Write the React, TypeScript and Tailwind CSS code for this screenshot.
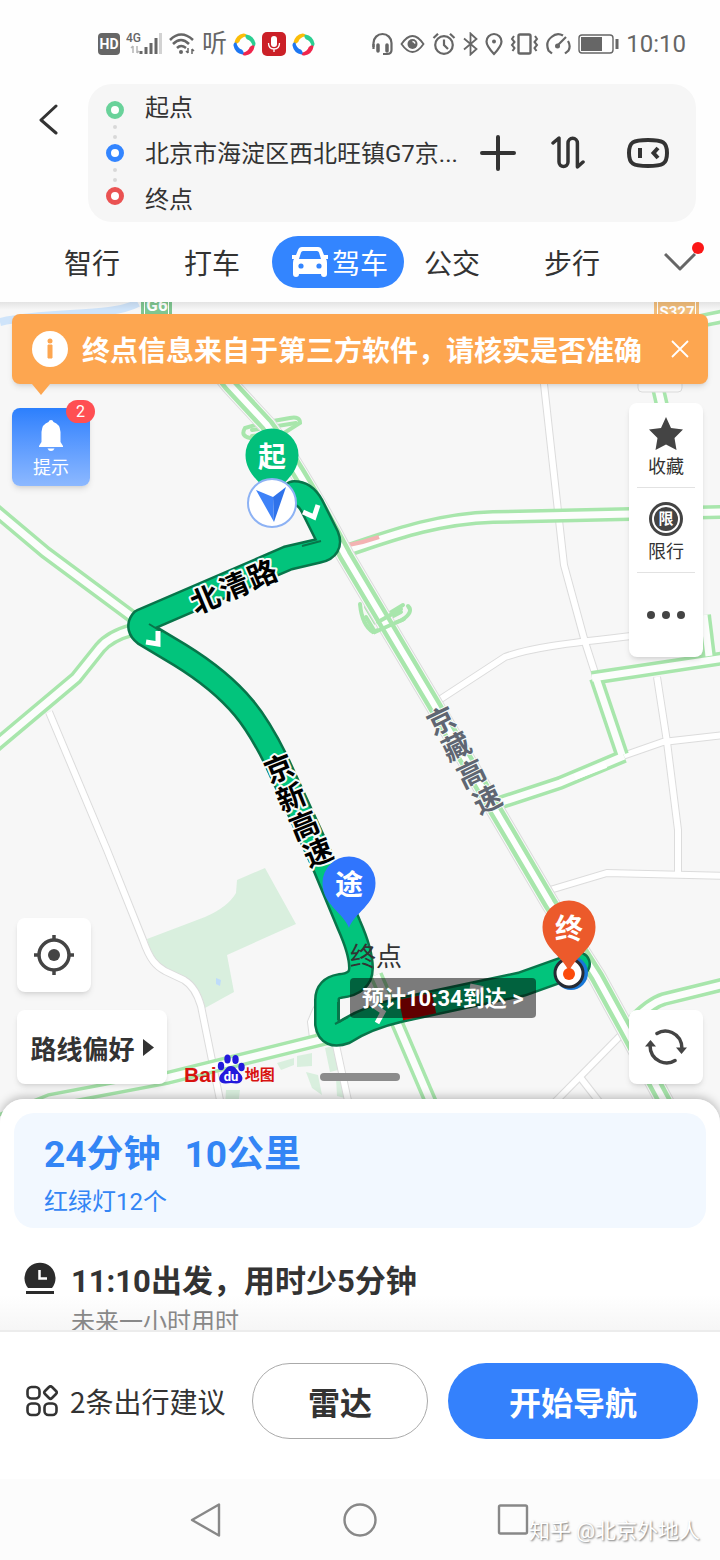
import type { ReactNode } from 'react';

const tabs = ['智行', '打车', '驾车', '公交', '步行'];

const minorRoads = [
  'M49 712 L107 850 L143 940 C150 960 156 966 165 971 L184 980 C194 986 198 996 201 1006 L222 1110',
  'M543 375 L557 502 L564 565 L585 642 L596 676',
  'M430 706 L505 657 C530 648 560 644 640 635',
  'M657 677 L667 742 L678 830 L678 876',
  'M617 758 L663 742 L725 735',
  'M550 890 L607 873 L725 876',
  'M555 1102 L622 1034',
  'M580 1077 L604 1108',
  'M322 1000 L316 1010 L311 1022 L313 1038 M336 1045 L350 1110',
];

const trafficRoads = [
  'M-5 510 L45 552 L142 624',
  'M-5 746 L76 678 L100 648 Q110 636 132 630',
  'M342 552 C380 540 430 519 493 517 L725 512',
  'M592 678 L725 658',
  'M596 678 L622 755',
  'M704 615 L709 656',
  'M493 805 L560 783 L624 756',
  'M622 1034 Q645 1005 664 999 L725 984',
  'M-5 1122 L50 1100 L167 1078 L336 1036',
  'M376 975 L397 1023 L432 1105',
  'M658 388 L663 410',
  'M690 323 L725 316',
];

const expressway = 'M190 335 L230 385 L267 425 Q300 470 345 555 L402 651 L433 703 L497 813 L550 903 L597 977 L626 1030 L668 1108';

const route =
  'M294 493 Q305 493 312 506 L327 536 Q332 548 318 551 L288 558 L142 621 Q137 628 145 634 L180 655 C240 692 258 724 276 760 L322 860 L349 925 Q361 952 361 968 Q361 984 340 986 Q327 988 327 1000 L327 1024 Q329 1038 345 1032 Q366 1018 400 1010 L522 984 L578 964';

type Glyph = [string, number, number];

const beiqing: Glyph[] = [['北', 205, 599], ['清', 234, 586], ['路', 262, 574]];
const jingxin: Glyph[] = [['京', 279, 768], ['新', 291, 797], ['高', 304, 825], ['速', 318, 852]];
const jingzang: Glyph[] = [['京', 441, 720], ['藏', 456, 746], ['高', 471, 773], ['速', 487, 799]];

function RoadName({ glyphs, angle, dark }: { glyphs: Glyph[]; angle: number; dark?: boolean }) {
  return (
    <g
      className={dark ? 'fill-black text-[29px] font-bold' : 'fill-[#5f6672] text-[28px] font-bold'}
      stroke="#f7fbf8"
      strokeWidth={dark ? 4 : 2}
      strokeLinejoin="round"
      paintOrder="stroke"
      textAnchor="middle"
    >
      {glyphs.map(([char, x, y]) => (
        <text key={char} x={x} y={y} dy={11} transform={`rotate(${angle} ${x} ${y})`}>
          {char}
        </text>
      ))}
    </g>
  );
}

function Pin({ x, y, color, label }: { x: number; y: number; color: string; label: string }) {
  return (
    <g transform={`translate(${x} ${y})`}>
      <path d="M0 45 C-5 30 -26.500 22 -26.500 0 A26.500 26.500 0 0 1 26.500 0 C26.500 22 5 30 0 45Z" fill={color} />
      <text y={12} textAnchor="middle" className="fill-white text-[28px] font-bold">
        {label}
      </text>
    </g>
  );
}

function MapCanvas() {
  return (
    <svg className="absolute inset-0 size-full" viewBox="0 302 720 830" preserveAspectRatio="xMidYMin slice" fill="none">
      <rect y="302" width="720" height="830" fill="#f7f7f7" />
      <path d="M0 322 C50 310 110 318 138 303" stroke="#cfe4fa" strokeWidth="8" />
      <path
        d="M147 939 L205 917 Q228 907 236 893 L237 880 L265 868 L296 924 L227 955 L234 992 L205 1008 Q200 985 185 977 L163 967 Q152 960 147 939Z"
        fill="#d9efde"
      />
      <path d="M216 978 l5 2 -1 6 -4 -2z" fill="#bfdcfa" />
      <path d="M277 1063 L294 1058 V1065 L281 1070Z M297 1056 L312 1053 V1066 L297 1067Z M325 1048 L336 1045 L338 1070 L330 1072Z M226 1090 H240 L238 1106 H225Z M306 1072 L318 1075 L322 1095 L312 1088Z M336 1078 L344 1082 L345 1098 L337 1096Z" fill="#d9efde" />

      {minorRoads.map((d) => (
        <path key={d} d={d} stroke="#dcdcdc" strokeWidth="8" />
      ))}
      {minorRoads.map((d) => (
        <path key={d} d={d} stroke="#fff" strokeWidth="6" />
      ))}
      {trafficRoads.map((d) => (
        <path key={d} d={d} stroke="#a8e6ac" strokeWidth="14" />
      ))}
      {trafficRoads.map((d) => (
        <path key={d} d={d} stroke="#fcfdfc" strokeWidth="7" />
      ))}
      <path d="M344 546 Q362 543 379 537" stroke="#f3b3b3" strokeWidth="4" />
      <path d="M575 777 L606 765" stroke="#fff" strokeWidth="6" />

      {/* interchanges */}
      <g stroke="#a8e6ac" strokeWidth="4" strokeLinecap="round">
        <path d="M250 438 Q240 436 245 428 L262 423 L290 418 Q300 416 300 423 L284 433 L252 436" />
        <path d="M252 430 L296 423" />
        <path d="M360 604 Q362 625 373 632 L402 620 Q414 612 408 606" />
        <path d="M366 607 L375 622 L403 605 M378 624 L401 612" />
      </g>

      <path d={expressway} stroke="#dcdcdc" strokeWidth="19" />
      <path d={expressway} stroke="#fafafa" strokeWidth="17" />
      <path d={expressway} stroke="#a8e6ac" strokeWidth="15" />
      <path d={expressway} stroke="#fff" strokeWidth="6" />
      <g stroke="#a8e6ac" strokeWidth="4" strokeLinecap="round">
        <path d="M366 617 L375 632 L404 619 M378 622 L401 609" />
      </g>

      <path d="M141 300 h31 v16 h-31z" fill="#7fc690" />
      <path d="M144.500 300 v16 M168.500 300 v16" stroke="#fff" />
      <text x="157" y="311" textAnchor="middle" className="fill-white text-[17px] font-bold">G6</text>
      <path d="M654 300 h45 v18 h-45z" fill="#f1bd7b" />
      <path d="M657.500 300 v18 M695.500 300 v18" stroke="#fff" />
      <text x="677" y="317" textAnchor="middle" className="fill-white text-[15px] font-bold">S327</text>
      <rect x="638" y="366" width="44" height="26" rx="4" fill="#fafafa" stroke="#ddd" />

      <path d={route} stroke="#08754a" strokeWidth="26" strokeLinecap="round" strokeLinejoin="round" />
      <path d={route} stroke="#02c47c" strokeWidth="21" strokeLinecap="round" strokeLinejoin="round" />
      <path d="M401 1010 L434 1003" stroke="#c00000" strokeWidth="21" />
      <path d="M321 541 L302 546 M149 624 L162 632 M338 1002 V1020 M335 1024 L348 1017" stroke="#08754a" strokeWidth="2" />
      <path d="M303 512 L314 517 L318 505 M146 642 L158 644 L158 631 M371 1004 L383 1012 L377 1023 M470 986 L480 988 L476 996" stroke="#fff" strokeWidth="5" />

      <RoadName glyphs={beiqing} angle={-23} dark />
      <RoadName glyphs={jingxin} angle={-22} dark />
      <RoadName glyphs={jingzang} angle={-26} />

      <text x="350" y="966" className="fill-[#333] text-[26px]">终点</text>

      <Pin x={272} y={455} color="#02c07b" label="起" />
      <circle cx="272" cy="503" r="24" fill="#fff" stroke="#8db2f4" strokeWidth="2" />
      <path d="M256 490 L273 497 L274 522Z" fill="#3e82f8" />
      <path d="M286 487 L273 497 L274 522Z" fill="#2f72ea" />

      <Pin x={349} y={883} color="#3075fd" label="途" />
      <circle cx="571" cy="973" r="17" fill="#1878d8" />
      <circle cx="569" cy="973" r="14" fill="#fff" stroke="#262b33" strokeWidth="3" />
      <Pin x={569} y={927} color="#ec5a2b" label="终" />
      <circle cx="569" cy="974" r="6" fill="#fb4b0c" />
    </svg>
  );
}

const swirlBlades = [
  { angle: 0, color: '#fbbd08' },
  { angle: 90, color: '#2bcf92' },
  { angle: 180, color: '#f0264c' },
  { angle: 270, color: '#1d77f2' },
];

function Swirl() {
  return (
    <svg className="size-[23px]" viewBox="0 0 24 24">
      {swirlBlades.map(({ angle, color }) => (
        <path key={angle} d="M1.500 10 Q3 2 11 0.500 Q14.500 0.500 14 3.500 Q8 4.500 6.500 9.500 Q3 12.500 1.500 10Z" fill={color} transform={`rotate(${angle} 12 12)`} />
      ))}
    </svg>
  );
}

function StatusBar() {
  return (
    <div className="flex items-center justify-between pt-8 pr-[34px] pb-7 pl-[98px] text-[#666]">
      <div className="flex h-6 items-center gap-1.5">
        <span className="flex size-[22px] items-center justify-center rounded bg-[#666] text-[14px] font-bold text-white">HD</span>
        <svg className="h-6 w-9" viewBox="0 0 36 24">
          <text x="0" y="10" fontSize="12" fontWeight="500" fill="#666">4G</text>
          <path d="M7 14v7M5 16l2-2M11 21v-7M13 19l-2 2" stroke="#b5b5b5" strokeWidth="1.500" fill="none" />
          <path d="M15 22v-3M20 22v-7M25 22v-11M30 22v-16" stroke="#666" strokeWidth="3" />
          <path d="M34.500 22v-21" stroke="#d2d2d2" strokeWidth="3" />
        </svg>
        <svg className="h-6 w-7" viewBox="0 0 28 24" fill="none" stroke="#666" strokeWidth="2.500">
          <path d="M2 8 Q13 -3 25 8M5 12 Q13 4 21 12M9 16 Q13 12 18 16" />
          <circle cx="13" cy="20" r="2" fill="#666" stroke="none" />
          <path d="M20 16v5M18 19l2 2M24 22v-5M26 19l-2-2" strokeWidth="1.500" />
        </svg>
        <span className="text-[25px] leading-6">听</span>
        <Swirl />
        <svg className="size-6" viewBox="0 0 24 24" fill="none">
          <rect width="24" height="24" rx="5" fill="#cb2027" />
          <rect x="9" y="4" width="6" height="11" rx="3" fill="#fff" />
          <path d="M6.500 11 Q6.500 17 12 17 Q17.500 17 17.500 11 M12 17v3" stroke="#fff" strokeWidth="1.300" />
        </svg>
        <Swirl />
      </div>
      <div className="flex h-6 items-center gap-[7px]">
        <svg className="h-6 w-[21px]" viewBox="0 0 21 24" fill="none" stroke="#666" strokeWidth="2.200">
          <path d="M1.500 15 V11 A9 9 0 0 1 19.500 11 V18 Q19.500 22 15 22 H11" />
          <path d="M6 13v6M15 13v6" strokeWidth="3.500" strokeLinecap="round" />
          <path d="M1.500 12v5" />
        </svg>
        <svg className="h-6 w-[25px]" viewBox="0 0 25 24" fill="none" stroke="#666" strokeWidth="1.800">
          <path d="M1.500 12 Q12.500 -4 23.500 12 Q12.500 28 1.500 12Z" />
          <circle cx="12.500" cy="12" r="5" fill="#666" stroke="none" />
          <path d="M12.500 9.500 q2 0 2.500 2" stroke="#fff" strokeWidth="1.500" />
        </svg>
        <svg className="size-6" viewBox="0 0 24 24" fill="none" stroke="#666" strokeWidth="2.200">
          <circle cx="12" cy="13" r="8.800" />
          <path d="M12 7.500 V13 L16 17 M1.500 6 L6 1.800 M22.500 6 L18 1.800" />
        </svg>
        <svg className="h-6 w-[15px]" viewBox="0 0 15 24" fill="none" stroke="#666" strokeWidth="1.800">
          <path d="M1 6.500 L13.500 17 L7.500 22.500 V1.500 L13.500 7 L1 17.500" />
        </svg>
        <svg className="h-6 w-[18px]" viewBox="0 0 18 24" fill="none" stroke="#666" strokeWidth="2.200">
          <path d="M9 22 Q1.500 14 1.500 9.500 A7.500 7.500 0 0 1 16.500 9.500 Q16.500 14 9 22Z" />
          <circle cx="9" cy="9.500" r="2" fill="#666" stroke="none" />
        </svg>
        <svg className="h-6 w-[29px]" viewBox="0 0 29 24" fill="none" stroke="#666" strokeWidth="2.400">
          <rect x="8.500" y="2.500" width="12" height="19" rx="1.500" />
          <path d="M4 4 l-2 3 2.500 3 -2.500 3 2.500 3 -2 3 M25 4 l2 3 -2.500 3 2.500 3 -2.500 3 2 3" strokeWidth="2" />
        </svg>
        <svg className="h-6 w-[25px]" viewBox="0 0 25 24" fill="none" stroke="#666" strokeWidth="2.200">
          <path d="M6 21.500 L2.500 18.500 Q-1 10 5.500 5 Q11 0 17 3.500 M22 9 Q25 14 22.500 18.500 L19 21.500" />
          <path d="M11 14 L20 5" />
          <circle cx="11.500" cy="14" r="2.500" fill="#666" stroke="none" />
        </svg>
        <svg className="h-6 w-[41px]" viewBox="0 0 41 24" fill="none">
          <rect x="1" y="3" width="34" height="18" rx="3" stroke="#666" strokeWidth="1.400" />
          <rect x="3" y="5" width="21" height="14" fill="#666" />
          <path d="M39 7v10" stroke="#666" strokeWidth="3" />
        </svg>
        <time className="text-[24px] leading-6">10:10</time>
      </div>
    </div>
  );
}

function StopRing({ className }: { className: string }) {
  return <span className={`size-[18px] rounded-full border-[5px] bg-white ${className}`} />;
}

function StopLink() {
  return (
    <span className="flex h-[25px] flex-col items-center justify-center gap-1.5">
      <span className="size-1 rounded-full bg-[#d8d8d8]" />
      <span className="size-1 rounded-full bg-[#d8d8d8]" />
    </span>
  );
}

function SearchHeader() {
  return (
    <header className="flex items-start pr-6 pl-6">
      <button aria-label="返回" className="flex w-16 items-center pt-5 pl-3.5">
        <svg className="h-8 w-5" viewBox="0 0 20 32" fill="none" stroke="#333" strokeWidth="3" strokeLinecap="round" strokeLinejoin="round">
          <path d="M18 2 L3 16 L18 29" />
        </svg>
      </button>
      <div className="flex flex-1 items-center rounded-3xl bg-[#f6f6f6] pr-[27px] pl-[18px] text-[#333]">
        <div className="flex flex-col items-center">
          <StopRing className="border-[#69d29a]" />
          <StopLink />
          <StopRing className="border-[#3385ff]" />
          <StopLink />
          <StopRing className="border-[#ea5252]" />
        </div>
        <div className="flex min-w-0 flex-1 flex-col pl-[21px] text-2xl">
          <button className="h-[46px] pt-0.5 text-left">起点</button>
          <button className="h-[46px] truncate pt-0.5 text-left">北京市海淀区西北旺镇G7京...</button>
          <button className="h-[46px] pt-0.5 text-left">终点</button>
        </div>
        <div className="flex items-center gap-8">
          <button aria-label="添加途经点">
            <svg className="size-10" viewBox="0 0 40 40" stroke="#333" strokeWidth="4" strokeLinecap="round">
              <path d="M19 4 V36 M3 20 H35" />
            </svg>
          </button>
          <button aria-label="交换起终点">
            <svg className="size-9" viewBox="0 0 36 36" fill="none" stroke="#333" strokeWidth="3.500" strokeLinecap="round" strokeLinejoin="round">
              <path d="M2 8 L8 3 V27 A4.500 4.500 0 0 0 17 27 V8 A4.700 4.700 0 0 1 26.400 8 V32 L32 27" />
            </svg>
          </button>
          <button aria-label="语音助手" className="pl-1.5">
            <svg className="h-8 w-11" viewBox="0 0 44 32" fill="none" stroke="#333" strokeWidth="4">
              <path d="M23 3 C38 3 42 5 42 16 C42 27 38 29 23 29 C8 29 4 27 4 16 C4 5 8 3 23 3Z" />
              <path d="M15 11 V21" />
              <path d="M33 11 L28.500 16 L33 21" />
            </svg>
          </button>
        </div>
      </div>
    </header>
  );
}

function CarIcon() {
  return (
    <svg className="h-[30px] w-9" viewBox="0 0 36 30">
      <path
        fill="#fff"
        fillRule="evenodd"
        d="M10 0 H26 Q29 0 30 3 L32 8 H36 V12 H34 Q35 13 35 16 V27 Q35 30 32 30 Q29 30 29 27 H7 Q7 30 4 30 Q1 30 1 27 V16 Q1 13 2 12 H0 V8 H4 L6 3 Q7 0 10 0Z M11 4 Q9.500 4 9 5.500 L7 12 H29 L27 5.500 Q26.500 4 25 4Z"
      />
      <circle cx="9" cy="19" r="2.600" fill="#3385ff" />
      <circle cx="27" cy="19" r="2.600" fill="#3385ff" />
    </svg>
  );
}

function ModeTabs() {
  return (
    <nav className="my-3.5 flex h-[52px] items-center font-['Noto_Sans_CJK_SC',sans-serif] text-[28px] text-[#333]">
      <button className="pr-8 pl-16">{tabs[0]}</button>
      <button className="px-8">{tabs[1]}</button>
      <button className="flex h-full w-[132px] items-center justify-center gap-1 rounded-full bg-[#3385ff] pl-1 text-white">
        <CarIcon />
        {tabs[2]}
      </button>
      <button className="pr-8 pl-5">{tabs[3]}</button>
      <button className="px-8">{tabs[4]}</button>
      <button aria-label="更多" className="relative ml-8">
        <svg className="h-5 w-8" viewBox="0 0 32 20" fill="none" stroke="#666" strokeWidth="3" strokeLinejoin="round">
          <path d="M1 2 L16 17 L31 2" />
        </svg>
        <span className="absolute -top-2.5 -right-2 size-3 rounded-full bg-[#fb1717]" />
      </button>
    </nav>
  );
}

function NoticeBanner() {
  return (
    <div className="absolute inset-x-3 top-3">
      <div className="flex h-[70px] items-center rounded-lg bg-[#fda650] pr-4 pl-5 text-white shadow-md">
        <svg className="size-9 shrink-0" viewBox="0 0 36 36">
          <circle cx="18" cy="18" r="18" fill="#fff" />
          <path d="M16 14 h4 v13 h-4z" fill="#fda650" stroke="#fda650" strokeLinejoin="round" />
          <circle cx="18" cy="10" r="2.500" fill="#fda650" />
        </svg>
        <p className="flex-1 pl-3.5 font-['Noto_Sans_CJK_SC',sans-serif] text-[28px] font-bold whitespace-nowrap">
          终点信息来自于第三方软件，请核实是否准确
        </p>
        <button aria-label="关闭">
          <svg className="size-6" viewBox="0 0 24 24" stroke="#fff" strokeWidth="1.800">
            <path d="M4 4 L20 20 M20 4 L4 20" />
          </svg>
        </button>
      </div>
      <div className="ml-5 h-[11px] w-[18px] bg-[#fda650] [clip-path:polygon(0_0,100%_0,50%_100%)]" />
    </div>
  );
}

function MapButton({ label, className, children }: { label: string; className: string; children: ReactNode }) {
  return (
    <button aria-label={label} className={`absolute flex h-[74px] items-center justify-center rounded-lg bg-white shadow-md ${className}`}>
      {children}
    </button>
  );
}

function MapView() {
  return (
    <main className="relative h-[828px] overflow-hidden">
      <MapCanvas />
      <div className="absolute inset-x-0 top-0 h-2 bg-linear-to-b from-black/8 to-transparent" />
      <NoticeBanner />

      <button className="absolute top-[106px] left-3 flex size-[78px] flex-col items-center rounded-lg bg-linear-to-b from-[#2b7ffd] to-[#8cb8ff] pt-3 text-[18px] leading-6 text-white shadow-md">
        <svg className="mb-1 h-8 w-6" viewBox="0 0 24 32" fill="#fff">
          <path d="M12 0 Q14 0 14.500 2 Q21 4 21.500 12 V22 L24 26 V27 H0 V26 L2.500 22 V12 Q3 4 9.500 2 Q10 0 12 0Z M8.500 28.500 H15.500 Q14.500 31 12 31 Q9.500 31 8.500 28.500Z" />
        </svg>
        提示
        <span className="absolute -top-2 -right-[5px] flex h-[23px] w-[29px] items-center justify-center rounded-full bg-[#ff4f53] text-base">2</span>
      </button>

      <div className="absolute top-[101px] right-[17px] w-[74px] divide-y divide-[#e2e2e2] rounded-lg bg-white px-2 text-[18px] leading-6 text-[#333] shadow-md">
        <button className="flex h-[85px] w-full flex-col items-center pt-3.5">
          <svg className="size-[34px]" viewBox="0 0 34 34" fill="#444">
            <path d="M17 0 L22 11 L34 12.500 L25.500 21 L27.500 33 L17 27.500 L6.500 33 L8.500 21 L0 12.500 L12 11Z" />
          </svg>
          <span className="mt-1">收藏</span>
        </button>
        <button className="flex h-[85px] w-full flex-col items-center pt-3.5">
          <span className="flex size-[34px] items-center justify-center rounded-full bg-[#444]">
            <span className="flex size-[28px] items-center justify-center rounded-full border-2 border-white text-[15px] leading-none font-bold text-white">限</span>
          </span>
          <span className="mt-1">限行</span>
        </button>
        <button aria-label="更多" className="flex h-[84px] w-full items-center justify-center gap-[7px]">
          <span className="size-2 rounded-full bg-[#444]" />
          <span className="size-2 rounded-full bg-[#444]" />
          <span className="size-2 rounded-full bg-[#444]" />
        </button>
      </div>

      <button className="absolute top-[676px] left-[350px] flex h-10 items-center rounded bg-black/50 px-3 text-[22px] font-bold whitespace-nowrap text-white">
        预计10:34到达 &gt;
      </button>

      <MapButton label="定位" className="top-[616px] left-[17px] w-[74px]">
        <svg className="size-10" viewBox="0 0 40 40" fill="none" stroke="#444" strokeWidth="3.500">
          <circle cx="20" cy="20" r="15" />
          <circle cx="20" cy="20" r="6" fill="#444" stroke="none" />
          <path d="M20 0 V6 M20 34 V40 M0 20 H6 M34 20 H40" />
        </svg>
      </MapButton>
      <MapButton label="路线偏好" className="top-[708px] left-[17px] w-[150px] gap-2 text-[26px] font-bold text-[#333]">
        <span className="font-['Noto_Sans_CJK_SC',sans-serif]">路线偏好</span>
        <svg className="h-[17px] w-[11px]" viewBox="0 0 11 17" fill="#333">
          <path d="M0 0 L11 8.500 L0 17Z" />
        </svg>
      </MapButton>
      <MapButton label="刷新" className="top-[708px] right-[17px] w-[74px]">
        <svg className="h-9 w-[42px]" viewBox="0 0 42 36" fill="none" stroke="#444" strokeWidth="3.500" strokeLinecap="round">
          <path d="M12 4.500 Q19 0 27 3.500 Q37 8 37 20 M30 31.500 Q23 36 15 32.500 Q5 28 5 16" />
          <path d="M31 18.500 H42 L36.500 25Z M0 17.500 H11 L5.500 11Z" fill="#444" stroke="none" />
        </svg>
      </MapButton>

      <div className="absolute top-[751px] left-[184px] flex items-end text-[#d8120f]">
        <span className="font-['Liberation_Sans',sans-serif] text-[21px] leading-5 font-bold">Bai</span>
        <svg className="h-8 w-7" viewBox="0 0 28 32" fill="#2319dc">
          <ellipse cx="4" cy="13" rx="3.200" ry="4.300" />
          <ellipse cx="10.500" cy="6" rx="3.200" ry="4.500" />
          <ellipse cx="18.500" cy="6.500" rx="3.200" ry="4.500" />
          <ellipse cx="24.500" cy="14" rx="3.200" ry="4.300" />
          <path d="M14 13 C19 13 20 18 23.500 21 C28 26 24 31 19 30.500 Q14 29.500 9 30.500 C3 31 0 26 4 21 C8 18 9 13 14 13Z" />
          <text x="14" y="28" textAnchor="middle" fontSize="13" fontWeight="700" fill="#fff">du</text>
        </svg>
        <span className="text-[15px] leading-5 font-bold">地图</span>
      </div>
      <div className="absolute top-[771px] left-1/2 h-2 w-20 -translate-x-1/2 rounded-full bg-[#8c8c8c]" />
    </main>
  );
}

function RouteSheet() {
  return (
    <section className="relative -mt-[31px] rounded-t-3xl bg-linear-to-b from-white from-85% to-[#f6f6f6] shadow-[0_-2px_10px_rgba(0,0,0,0.25)]">
      <div className="px-3.5 pt-3.5">
        <div className="rounded-[20px] bg-[#f2f8ff] px-[30px] pt-[18px] pb-2.5 text-[#3385f5]">
          <h2 className="flex gap-6 text-[37px] leading-[48px] font-bold">
            <span>24分钟</span>
            <span>10公里</span>
          </h2>
          <p className="mt-[7px] text-2xl leading-8">红绿灯12个</p>
        </div>
      </div>
      <div className="mt-8 flex items-start gap-[15px] pl-6">
        <svg className="mt-0.5 size-8" viewBox="0 0 32 32" fill="none">
          <path d="M4 26 A15.500 15.500 0 1 1 28 26Z" fill="#2b2b2b" />
          <path d="M2 30.500 H30" stroke="#2b2b2b" strokeWidth="3" />
          <path d="M15.500 8 V16.500 H23" stroke="#fff" strokeWidth="2.500" />
        </svg>
        <div>
          <h3 className="pt-0.5 text-[31px] leading-10 font-bold text-[#333]">11:10出发，用时少5分钟</h3>
          <p className="mt-1 h-6 overflow-hidden text-2xl leading-8 text-[#888]">未来一小时用时</p>
        </div>
      </div>
    </section>
  );
}

function ActionBar() {
  return (
    <footer className="relative flex items-center border-t-2 border-[#ececec] bg-white pt-[31px] pr-[22px] pb-10 pl-[26px] font-['Noto_Sans_CJK_SC',sans-serif] text-[#333]">
      <button className="flex items-center gap-3 text-[28px] whitespace-nowrap">
        <svg className="size-8" viewBox="0 0 32 32" fill="none" stroke="#333" strokeWidth="2.600">
          <rect x="1.500" y="2" width="12" height="11.500" rx="4" />
          <rect x="1.500" y="18.500" width="12" height="11.500" rx="4" />
          <rect x="18.500" y="18.500" width="12" height="11.500" rx="4" />
          <path d="M23 2 Q24.500 0.500 26 2 L30 6 Q31.500 7.500 30 9 L26 13 Q24.500 14.500 23 13 L19 9 Q17.500 7.500 19 6Z" />
        </svg>
        2条出行建议
      </button>
      <button className="ml-auto h-[76px] w-44 rounded-full border border-[#aaa] text-[32px] font-bold">雷达</button>
      <button className="ml-5 h-[76px] w-[250px] rounded-full bg-[#3481fc] text-[32px] font-bold text-white">开始导航</button>
    </footer>
  );
}

function SystemNav() {
  return (
    <div className="relative flex h-[82px] items-center justify-center gap-[118px] bg-[#fcfcfc]">
      <button aria-label="后退">
        <svg className="size-9" viewBox="0 0 36 36" fill="none" stroke="#888" strokeWidth="2.400" strokeLinejoin="round">
          <path d="M31 2.500 V33.500 L4 18Z" />
        </svg>
      </button>
      <button aria-label="主页">
        <svg className="size-9" viewBox="0 0 36 36" fill="none" stroke="#888" strokeWidth="2.400">
          <circle cx="18" cy="18" r="15.500" />
        </svg>
      </button>
      <button aria-label="最近任务">
        <svg className="size-9" viewBox="0 0 36 36" fill="none" stroke="#888" strokeWidth="2.400">
          <rect x="3" y="3.500" width="28" height="28" rx="1.500" />
        </svg>
      </button>
      <span className="absolute right-5 bottom-3.5 text-[21px] whitespace-nowrap text-white [text-shadow:1px_1px_2px_rgba(0,0,0,0.55)]">
        知乎 @北京外地人
      </span>
    </div>
  );
}

export default function App() {
  return (
    <div className="w-full overflow-hidden bg-[#fefefe] font-['Roboto','Noto_Sans_CJK_SC',sans-serif]">
      <StatusBar />
      <SearchHeader />
      <ModeTabs />
      <MapView />
      <RouteSheet />
      <ActionBar />
      <SystemNav />
    </div>
  );
}
